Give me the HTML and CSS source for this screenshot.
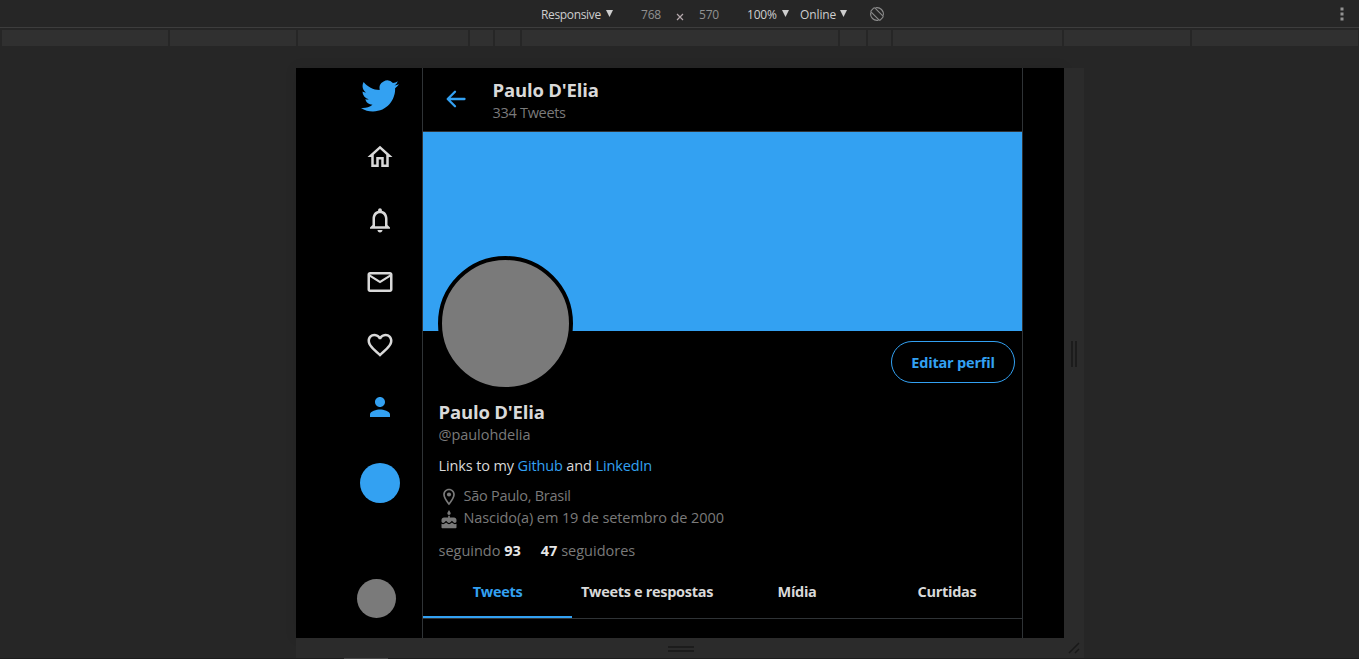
FILE: index.html
```html
<!DOCTYPE html>
<html lang="pt-BR">
<head>
<meta charset="utf-8">
<title>Paulo D'Elia</title>
<link rel="stylesheet" href="styles.css">
</head>
<body>
<div class="toolbar">
  <span class="select mode"><span>Responsive</span><i class="caret"></i></span>
  <span class="size">768</span>
  <svg class="times" viewBox="0 0 8 8"><path d="M1 1l6 6M7 1L1 7"/></svg>
  <span class="size height">570</span>
  <span class="select zoom"><span>100%</span><i class="caret"></i></span>
  <span class="select net"><span>Online</span><i class="caret"></i></span>
  <svg class="rotate" viewBox="0 0 16 16"><rect x="5.300" y="1.500" width="5.400" height="13" rx="1" transform="rotate(-45 8 8)"/><path d="M1.800 6.500A6.400 6.400 0 0 0 9.500 14.200M6.500 1.800A6.400 6.400 0 0 1 14.200 9.500"/></svg>
  <svg class="more" viewBox="0 0 4 14"><path d="M.5.500h3v3h-3zM.5 5.500h3v3h-3zM.5 10.500h3v3h-3z"/></svg>
</div>
<div class="ruler"><i></i><i></i><i></i><i></i><i></i><i></i><i></i><i></i><i></i><i></i><i></i></div>
<div class="stage">
  <div class="device">
    <nav class="menu">
      <div class="menu-top">
        <svg class="logo" viewBox="0 0 24 24"><path d="M23.953 4.570a10 10 0 01-2.825.775 4.958 4.958 0 002.163-2.723c-.951.555-2.005.959-3.127 1.184a4.920 4.920 0 00-8.384 4.482C7.690 8.095 4.067 6.130 1.640 3.162a4.822 4.822 0 00-.666 2.475c0 1.710.870 3.213 2.188 4.096a4.904 4.904 0 01-2.228-.616v.060a4.923 4.923 0 003.946 4.827 4.996 4.996 0 01-2.212.085 4.936 4.936 0 004.604 3.417 9.867 9.867 0 01-6.102 2.105c-.390 0-.779-.023-1.170-.067a13.995 13.995 0 007.557 2.209c9.053 0 13.998-7.496 13.998-13.985 0-.210 0-.420-.015-.630A9.935 9.935 0 0024 4.590z"/></svg>
        <svg class="item" viewBox="0 0 24 24"><path d="M12 5.690l5 4.500V18h-2v-6H9v6H7v-7.810l5-4.500M12 3L2 12h3v8h6v-6h2v6h6v-8h3L12 3z"/></svg>
        <svg class="item" viewBox="0 0 24 24"><path d="M12 22c1.100 0 2-.900 2-2h-4c0 1.100.890 2 2 2zm6-6v-5c0-3.070-1.640-5.640-4.500-6.320V4c0-.830-.670-1.500-1.500-1.500s-1.500.670-1.500 1.500v.680C7.630 5.360 6 7.920 6 11v5l-2 2v1h16v-1l-2-2zm-2 1H8v-6c0-2.480 1.510-4.500 4-4.500s4 2.020 4 4.500v6z"/></svg>
        <svg class="item" viewBox="0 0 24 24"><path d="M22 6c0-1.100-.900-2-2-2H4c-1.100 0-2 .900-2 2v12c0 1.100.900 2 2 2h16c1.100 0 2-.900 2-2V6zm-2 0l-8 4.990L4 6h16zm0 12H4V8l8 5 8-5v10z"/></svg>
        <svg class="item" viewBox="0 0 24 24"><path d="M16.500 3c-1.740 0-3.410.810-4.500 2.090C10.910 3.810 9.240 3 7.500 3 4.420 3 2 5.420 2 8.500c0 3.780 3.400 6.860 8.550 11.540L12 21.350l1.450-1.320C18.600 15.360 22 12.280 22 8.500 22 5.420 19.580 3 16.500 3zm-4.400 15.550l-.100.100-.100-.100C7.140 14.240 4 11.390 4 8.500 4 6.500 5.500 5 7.500 5c1.540 0 3.040.990 3.570 2.360h1.870C13.460 5.990 14.960 5 16.500 5c2 0 3.500 1.500 3.500 3.500 0 2.890-3.140 5.740-7.900 10.050z"/></svg>
        <svg class="item active" viewBox="0 0 24 24"><path d="M12 12c2.210 0 4-1.790 4-4s-1.790-4-4-4-4 1.790-4 4 1.790 4 4 4zm0 2c-2.670 0-8 1.340-8 4v2h16v-2c0-2.660-5.330-4-8-4z"/></svg>
        <span class="compose"></span>
      </div>
      <span class="account"></span>
    </nav>
    <main class="profile">
      <header class="head">
        <svg class="back" viewBox="0 0 20 18"><path d="M18.500 9H2M9 1.700L1.700 9L9 16.300"/></svg>
        <div><strong class="name">Paulo D'Elia</strong><span class="count">334 Tweets</span></div>
      </header>
      <div class="banner"></div>
      <section class="info">
        <div class="top"><div class="avatar"></div><button class="edit">Editar perfil</button></div>
        <h1 class="name">Paulo D'Elia</h1>
        <div class="handle">@paulohdelia</div>
        <p class="bio">Links to my <a>Github</a> and <a>LinkedIn</a></p>
        <div class="fact place"><svg viewBox="0 0 24 24"><path d="M12 2C8.130 2 5 5.130 5 9c0 5.250 7 13 7 13s7-7.750 7-13c0-3.870-3.130-7-7-7zM7 9c0-2.760 2.240-5 5-5s5 2.240 5 5c0 2.880-2.880 7.190-5 9.880C9.920 16.210 7 11.850 7 9z"/><circle cx="12" cy="9" r="2.500"/></svg><span>São Paulo, Brasil</span></div>
        <div class="fact born"><svg viewBox="0 0 24 24"><path d="M12 6c1.110 0 2-.900 2-2 0-.380-.100-.730-.290-1.030L12 0l-1.710 2.970c-.190.300-.290.650-.290 1.030 0 1.100.900 2 2 2zm4.600 9.990l-1.070-1.070-1.080 1.070c-1.300 1.300-3.580 1.310-4.890 0l-1.070-1.070-1.090 1.070C6.750 16.640 5.880 17 4.960 17c-.730 0-1.400-.230-1.960-.610V21c0 .550.450 1 1 1h16c.550 0 1-.450 1-1v-4.610c-.560.380-1.230.610-1.960.610-.920 0-1.790-.360-2.440-1.010zM18 9h-5V7h-2v2H6c-1.660 0-3 1.340-3 3v1.540c0 1.080.880 1.960 1.960 1.960.520 0 1.020-.200 1.380-.570l2.140-2.130 2.130 2.130c.740.740 2.030.740 2.770 0l2.140-2.130 2.130 2.130c.370.370.860.570 1.380.570 1.080 0 1.960-.880 1.960-1.960V12c0-1.660-1.340-3-3-3z"/></svg><span>Nascido(a) em 19 de setembro de 2000</span></div>
        <div class="follow"><span>seguindo <b>93</b></span><span><b>47</b> seguidores</span></div>
      </section>
      <div class="tabs"><span class="tab on">Tweets</span><span class="tab">Tweets e respostas</span><span class="tab">Mídia</span><span class="tab">Curtidas</span></div>
    </main>
  </div>
  <div class="grip right"><i></i><i></i></div>
  <div class="grip bottom"><i></i><i></i></div>
  <div class="corner"><svg viewBox="0 0 12 12"><path d="M1 11L11 1M7 11L11 7"/></svg></div>
</div>
<div class="edge"><i></i></div>
</body>
</html>
```
FILE: styles.css
```css
* { box-sizing: border-box; }
body { margin: 0; width: 1359px; height: 659px; overflow: hidden; background: #262626; color: #d9d9d9; font-family: "Open Sans", "Noto Sans", sans-serif; }
svg { display: block; flex: none; fill: currentColor; }

.toolbar { display: flex; align-items: center; height: 28px; padding: 1px 15.500px 0 541px; border-bottom: 1px solid #3d3d3d; font-size: 12px; line-height: 27px; color: #cecece; }
.select { display: flex; align-items: center; justify-content: space-between; }
.select span, .size { padding-top: 1px; }
.mode { width: 72px; letter-spacing: -.35px; }
.zoom { width: 42px; margin-left: 26px; letter-spacing: -.2px; }
.net { width: 47px; margin-left: 11px; letter-spacing: -.1px; }
.caret { width: 7px; height: 7px; margin-top: -1px; background: #cecece; clip-path: polygon(0 0, 100% 0, 50% 100%); }
.size { width: 22px; margin-left: 28px; color: #919191; letter-spacing: -.2px; }
.size.height { margin-left: 15px; }
.times { width: 8px; height: 8px; margin: 5px 0 0 13px; fill: none; stroke: #b5a9ad; stroke-width: 1.2; }
.rotate { width: 16px; height: 16px; margin-left: 22px; fill: none; stroke: #8b8b8b; stroke-width: 1.1; }
.more { width: 4px; height: 14px; margin-left: auto; fill: #929292; }

.ruler { display: grid; grid-template-columns: 166px 126px 170px 23px 25px 316px 26px 23px 169px 126px 166px; column-gap: 2px; height: 16px; margin: 2px 0 0 2px; }
.ruler i { background: #303030; }

.stage { display: grid; grid-template-columns: 768px 20px; grid-template-rows: 570px 20px; margin: 22px 0 0 296px; width: 788px; }
.device { display: flex; background: #000; box-shadow: 0 0 12px rgba(0,0,0,.08); }
.grip { display: flex; align-items: center; justify-content: center; gap: 2px; background: #2b2b2b; }
.grip i { background: #1c1c1c; }
.right { padding-top: 1px; }
.right i { width: 2px; height: 26px; }
.bottom { flex-direction: column; padding: 1px 0 0 2px; }
.bottom i { width: 26px; height: 2px; }
.corner { background: #2b2b2b; padding: 4px 0 0 4px; }
.corner svg { width: 12px; height: 12px; fill: none; stroke: #191919; stroke-width: 1.5; }
.edge { height: 1px; padding-left: 344px; background: #1d1d1d; }
.edge i { display: block; width: 44px; height: 1px; background: #454545; }

.menu { display: flex; flex-direction: column; justify-content: space-between; width: 126px; padding: 8px 22px 20px 0; }
.menu-top { display: flex; flex-direction: column; align-items: flex-end; }
.logo { width: 38px; height: 38px; margin: .5px 1px 27.500px 0; color: #33a1f2; }
.item { width: 30px; height: 30px; margin: 0 5px 32.500px 0; }
.item.active { color: #33a1f2; margin-bottom: 41px; }
.compose { width: 40px; height: 40px; border-radius: 50%; background: #33a1f2; }
.account { align-self: flex-end; width: 39px; height: 39px; margin-right: 4px; border-radius: 50%; background: #7a7a7a; }

.profile { width: 601px; border-left: 1px solid #2f3336; border-right: 1px solid #2f3336; }
.head { display: flex; align-items: flex-start; height: 64px; padding-left: 23px; border-bottom: 1px solid #2f3336; }
.back { width: 20px; height: 18px; margin: 22px 26.500px 0 0; fill: none; stroke: #33a1f2; stroke-width: 2.300; stroke-linecap: round; stroke-linejoin: round; }
.head .name { display: block; margin-top: 9px; }
.name { margin: 0; font-size: 18.500px; font-weight: 700; line-height: 25px; letter-spacing: -.17px; }
.count, .handle { display: block; font-size: 14.500px; line-height: 22px; color: #7a7a7a; letter-spacing: -.3px; }
.banner { height: 199px; background: #33a1f2; }
.info { height: 238px; padding: 0 7px 0 15.500px; }
.top { display: flex; justify-content: space-between; align-items: flex-start; height: 68px; }
.avatar { width: 135px; height: 135px; margin: -75px 0 0 -.5px; border: 4px solid #000; border-radius: 50%; background: #7a7a7a; }
.edit { width: 124px; height: 42px; margin-top: 10px; padding: 2px 0 0; border: 1px solid #33a1f2; border-radius: 21px; background: transparent; color: #33a1f2; font: 700 14.500px/38px "Open Sans", sans-serif; letter-spacing: -.2px; }
.handle { line-height: 21px; letter-spacing: -.05px; }
.bio { margin: 10px 0 0; font-size: 14.500px; line-height: 22px; letter-spacing: -.13px; }
.bio a { color: #33a1f2; }
.bio + .fact { margin-top: 8px; }
.fact { display: flex; height: 22px; font-size: 14.500px; line-height: 22px; color: #7a7a7a; letter-spacing: -.1px; }
.fact.place { letter-spacing: -.26px; }
.fact svg { width: 20px; height: 20px; margin: 2px 4.500px 0 .5px; }
.born svg { margin-top: 3px; }
.follow { display: flex; gap: 20px; margin-top: 11px; font-size: 14.500px; line-height: 22px; color: #7a7a7a; letter-spacing: 0; }
.follow b { color: #e6e6e6; }
.tabs { display: grid; grid-template-columns: 149px 150px 150px 150px; height: 50px; border-bottom: 1px solid #2f3336; }
.tab { height: 49px; text-align: center; font-size: 14.500px; font-weight: 700; line-height: 46px; letter-spacing: -.3px; }
.tab.on { color: #33a1f2; border-bottom: 2px solid #33a1f2; }
```
